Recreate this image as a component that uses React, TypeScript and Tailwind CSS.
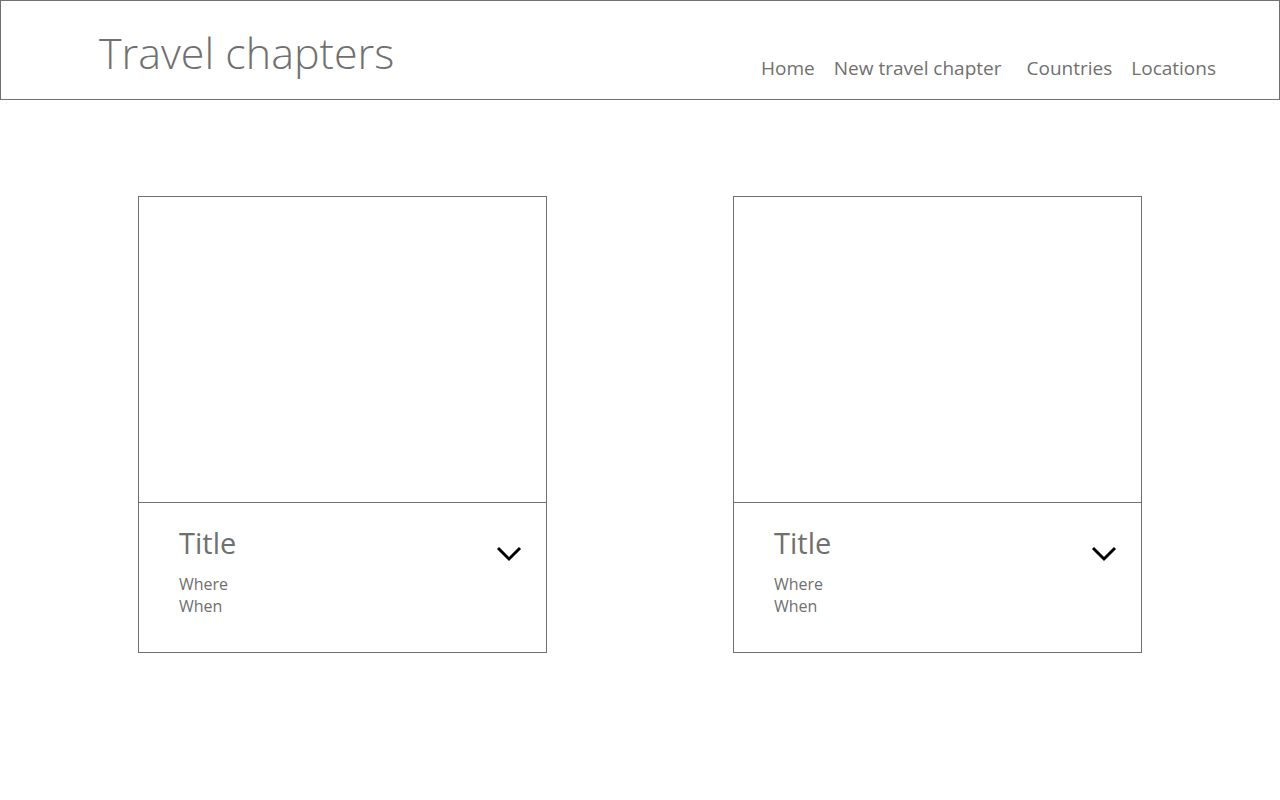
import React from "react";

function Card() {
  return (
    <div className="w-[409px] h-[457px] border border-[#707070] flex flex-col">
      <div className="h-[306px] border-b border-[#707070]" />
      <div className="flex-1 flex pl-[40px] pr-[24px] pt-[22px]">
        <div className="flex-1 flex flex-col">
          <div className="text-[29px] leading-[36px] text-[#707070]">Title</div>
          <div className="mt-[12px] text-[16px] leading-[22px] text-[#707070]">Where</div>
          <div className="text-[16px] leading-[22px] text-[#707070]">When</div>
        </div>
        <svg width="26" height="16" viewBox="0 0 26 16" className="mt-[21px]">
          <path d="M2 2 L13 13 L24 2" fill="none" stroke="#000" strokeWidth="3" />
        </svg>
      </div>
    </div>
  );
}

export default function App() {
  return (
    <div className="w-[1280px] h-[800px] bg-white" style={{ fontFamily: '"Open Sans", "Noto Sans", sans-serif' }}>
      <header className="h-[100px] border border-[#707070] flex items-start pl-[98px] pr-[63px]">
        <div className="mt-[22px] text-[43px] leading-[60px] text-[#707070] font-light">Travel chapters</div>
        <nav className="ml-auto mt-[53px] flex gap-[19px] text-[19px] leading-[28px] text-[#707070]">
          <span>Home</span>
          <span className="mr-[6px]">New travel chapter</span>
          <span>Countries</span>
          <span>Locations</span>
        </nav>
      </header>
      <main className="flex justify-between px-[138px] pt-[96px]">
        <Card />
        <Card />
      </main>
    </div>
  );
}
